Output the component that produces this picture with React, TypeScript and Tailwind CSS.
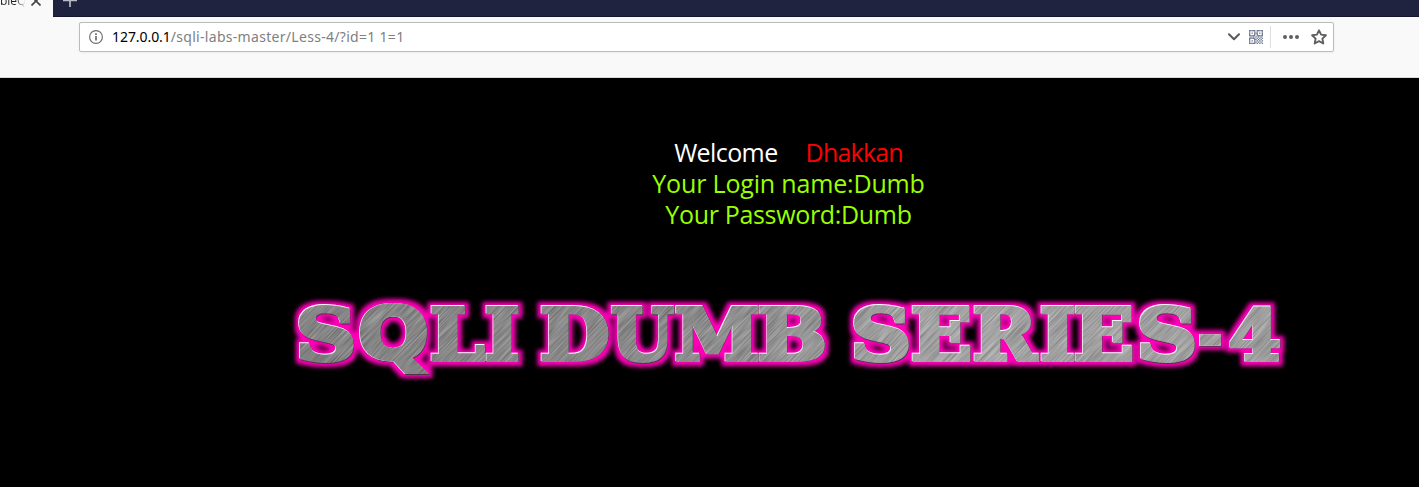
import React from "react";

type Glyph = { ch: string; left: number; right: number; top?: number; bottom?: number; font?: string };

const SLAB = "bold 72px 'DejaVu Serif'";

const GLYPHS: Glyph[] = [
  { ch: "S", left: 298, right: 354, top: 303, bottom: 363 },
  { ch: "Q", left: 359, right: 430, top: 302, bottom: 374, font: "800 72px 'Open Sans'" },
  { ch: "L", left: 431, right: 486 },
  { ch: "I", left: 486, right: 519 },
  { ch: "D", left: 541, right: 609 },
  { ch: "U", left: 611, right: 675, bottom: 363 },
  { ch: "M", left: 676, right: 759 },
  { ch: "B", left: 759, right: 825 },
  { ch: "S", left: 853, right: 909, top: 303, bottom: 363 },
  { ch: "E", left: 912, right: 971 },
  { ch: "R", left: 974, right: 1040 },
  { ch: "I", left: 1041, right: 1075 },
  { ch: "E", left: 1075, right: 1133 },
  { ch: "S", left: 1139, right: 1195, top: 303, bottom: 363 },
  { ch: "-", left: 1199, right: 1221, top: 334, bottom: 346 },
  { ch: "4", left: 1229, right: 1281 },
];

const STROKE = 4;

function Letters({ color }: { color: string }) {
  const ctx = document.createElement("canvas").getContext("2d")!;
  return (
    <g fill={color} stroke={color} strokeLinejoin="miter" strokeMiterlimit="2">
      {GLYPHS.map((g, i) => {
        const font = g.font ?? SLAB;
        const stroke = g.font ? 1 : STROKE;
        ctx.font = font;
        const m = ctx.measureText(g.ch);
        const l = -m.actualBoundingBoxLeft - stroke / 2;
        const r = m.actualBoundingBoxRight + stroke / 2;
        const t = -m.actualBoundingBoxAscent - stroke / 2;
        const b = m.actualBoundingBoxDescent + stroke / 2;
        const top = g.top ?? 305;
        const bottom = g.bottom ?? 361.5;
        const sx = (g.right - g.left) / (r - l);
        const sy = (bottom - top) / (b - t);
        return (
          <text
            key={i}
            style={{ font }}
            strokeWidth={stroke}
            transform={`matrix(${sx} 0 0 ${sy} ${g.left - l * sx} ${top - t * sy})`}
          >
            {g.ch}
          </text>
        );
      })}
    </g>
  );
}

function Banner() {
  return (
    <svg viewBox="280 285 1020 105" className="block h-[105px] w-[1020px]" aria-label="SQLI DUMB SERIES-4">
      <defs>
        <filter id="glow" filterUnits="userSpaceOnUse" x="280" y="285" width="1020" height="105" colorInterpolationFilters="sRGB">
          <feMorphology operator="dilate" radius="4" />
          <feGaussianBlur stdDeviation="2" />
        </filter>
        <filter id="brushed" filterUnits="userSpaceOnUse" x="-200" y="-1100" width="1900" height="2400" colorInterpolationFilters="sRGB">
          <feTurbulence type="fractalNoise" baseFrequency="0.03 0.95" numOctaves="2" seed="4" />
          <feColorMatrix values="0.6 0 0 0 0.25  0.6 0 0 0 0.25  0.6 0 0 0 0.25  0 0 0 0 1" />
        </filter>
        <linearGradient id="sheen" gradientUnits="userSpaceOnUse" x1="298" y1="0" x2="1281" y2="0">
          <stop offset="0" stopColor="#777" stopOpacity=".4" />
          <stop offset=".4" stopColor="#888" stopOpacity=".4" />
          <stop offset=".65" stopColor="#c4c4c4" stopOpacity=".4" />
          <stop offset="1" stopColor="#b8b8b8" stopOpacity=".4" />
        </linearGradient>
        <mask id="letters" maskUnits="userSpaceOnUse" x="280" y="285" width="1020" height="105">
          <Letters color="#fff" />
        </mask>
      </defs>
      <g filter="url(#glow)">
        <Letters color="#ff00b8" />
      </g>
      <g transform="translate(0.5 0.5)">
        <Letters color="#54304d" />
      </g>
      <g transform="translate(-0.6 -0.6)">
        <Letters color="#fff" />
      </g>
      <g mask="url(#letters)">
        <g transform="rotate(-46 790 335)">
          <rect x="-200" y="-1100" width="1900" height="2400" filter="url(#brushed)" />
        </g>
        <rect x="280" y="285" width="1020" height="105" fill="url(#sheen)" />
      </g>
    </svg>
  );
}

function QrIcon() {
  const rows = [
    "11111011111",
    "10001010001",
    "10101110101",
    "10001010001",
    "11111011111",
    "01010101010",
    "11111010101",
    "10001101010",
    "10101010101",
    "10001101010",
    "11111010101",
  ];
  return (
    <svg viewBox="0 0 11 11" className="size-[14px] shrink-0" fill="#66728a">
      {rows.flatMap((r, y) =>
        [...r].map((c, x) => (c === "1" ? <rect key={`${x}-${y}`} x={x} y={y} width="1" height="1" /> : null)),
      )}
    </svg>
  );
}

export default function App() {
  return (
    <div className="flex h-[487px] w-[1419px] flex-col overflow-hidden bg-black font-['Open_Sans',sans-serif]">
      <header className="flex h-[78px] shrink-0 flex-col border-b border-[#d9d9d9] bg-[#f9f9fa]">
        <div className="flex h-[17px] shrink-0 overflow-hidden">
          <div className="flex w-[53px] shrink-0 items-start overflow-hidden">
            <span className="-mt-[7px] w-[25px] shrink-0 overflow-hidden bg-linear-to-r from-[#222] from-60% to-[#eee] bg-clip-text text-[12px] leading-[16px] text-transparent">
              bleQ
            </span>
            <svg viewBox="0 0 10 10" className="ml-[6px] -mt-[4px] size-[10px]" stroke="#444" strokeWidth="1.7">
              <path d="M.5.5l9 9M9.5.5l-9 9" />
            </svg>
          </div>
          <div className="flex flex-1 border-b border-[#14162f] bg-[#202340] pl-[10px]">
            <svg viewBox="0 0 14 14" className="-mt-[7px] size-[14px]" stroke="#b9bac6" strokeWidth="1.7">
              <path d="M7 0v14M0 7.5h14" />
            </svg>
          </div>
        </div>
        <div className="mt-[5px] ml-[79px] flex h-[30px] w-[1255px] shrink-0 items-center rounded-[2px] border border-[#bcbcbc] bg-white pl-[9px] shadow-[0_1px_3px_rgba(0,0,0,0.05)]">
          <svg viewBox="0 0 14 14" className="size-[14px] shrink-0" fill="none" stroke="#6b6b6b">
            <circle cx="7" cy="7" r="6.4" strokeWidth="1.1" />
            <path d="M7 6v4.5M7 3.2v1.7" strokeWidth="1.7" />
          </svg>
          <span className="ml-[9px] font-['Noto_Sans',sans-serif] text-[14px] leading-[20px] tracking-[0.3px] whitespace-pre text-[#808080]">
            <span className="tracking-[-0.06px] text-black">127.0.0.1</span>/sqli-labs-master/Less-4/?id=1 1=1
          </span>
          <div className="ml-auto flex items-center">
            <svg viewBox="0 0 12 8" className="mr-[9px] h-[8px] w-[12px]" fill="none" stroke="#5a5a5a" strokeWidth="2" strokeLinecap="round" strokeLinejoin="round">
              <path d="M1 1.2l5 5 5-5" />
            </svg>
            <QrIcon />
            <div className="mr-[12px] ml-[7px] h-[22px] w-px bg-[#dedede]" />
            <svg viewBox="0 0 16 4" className="h-[4px] w-[16px]" fill="#5f5f5f">
              <circle cx="2" cy="2" r="2" />
              <circle cx="8" cy="2" r="2" />
              <circle cx="14" cy="2" r="2" />
            </svg>
            <svg viewBox="0 0 16 16" className="mr-[6px] ml-[12px] size-[16px]" fill="none" stroke="#5f5f5f" strokeWidth="1.9" strokeLinejoin="round">
              <path d="M8 1.3l2.1 4.3 4.8.7-3.5 3.3.9 4.9L8 12.2l-4.3 2.3.9-4.9L1.1 6.3l4.8-.7z" />
            </svg>
          </div>
        </div>
      </header>
      <main className="flex flex-col">
        <div className="mt-[59px] ml-[158px] flex w-[1261px] flex-col items-center text-[25px] leading-[31px] font-[450] whitespace-pre text-[#99ff00]">
          <div className="flex gap-[28px]">
            <span className="tracking-[-0.6px] text-white">Welcome</span>
            <span className="tracking-[-0.8px] text-[#ff0000]">Dhakkan</span>
          </div>
          <div className="tracking-[-0.17px]">Your Login name:Dumb</div>
          <div className="tracking-[-0.33px]">Your Password:Dumb</div>
        </div>
        <div className="mt-[55px] ml-[280px]">
          <Banner />
        </div>
      </main>
    </div>
  );
}
